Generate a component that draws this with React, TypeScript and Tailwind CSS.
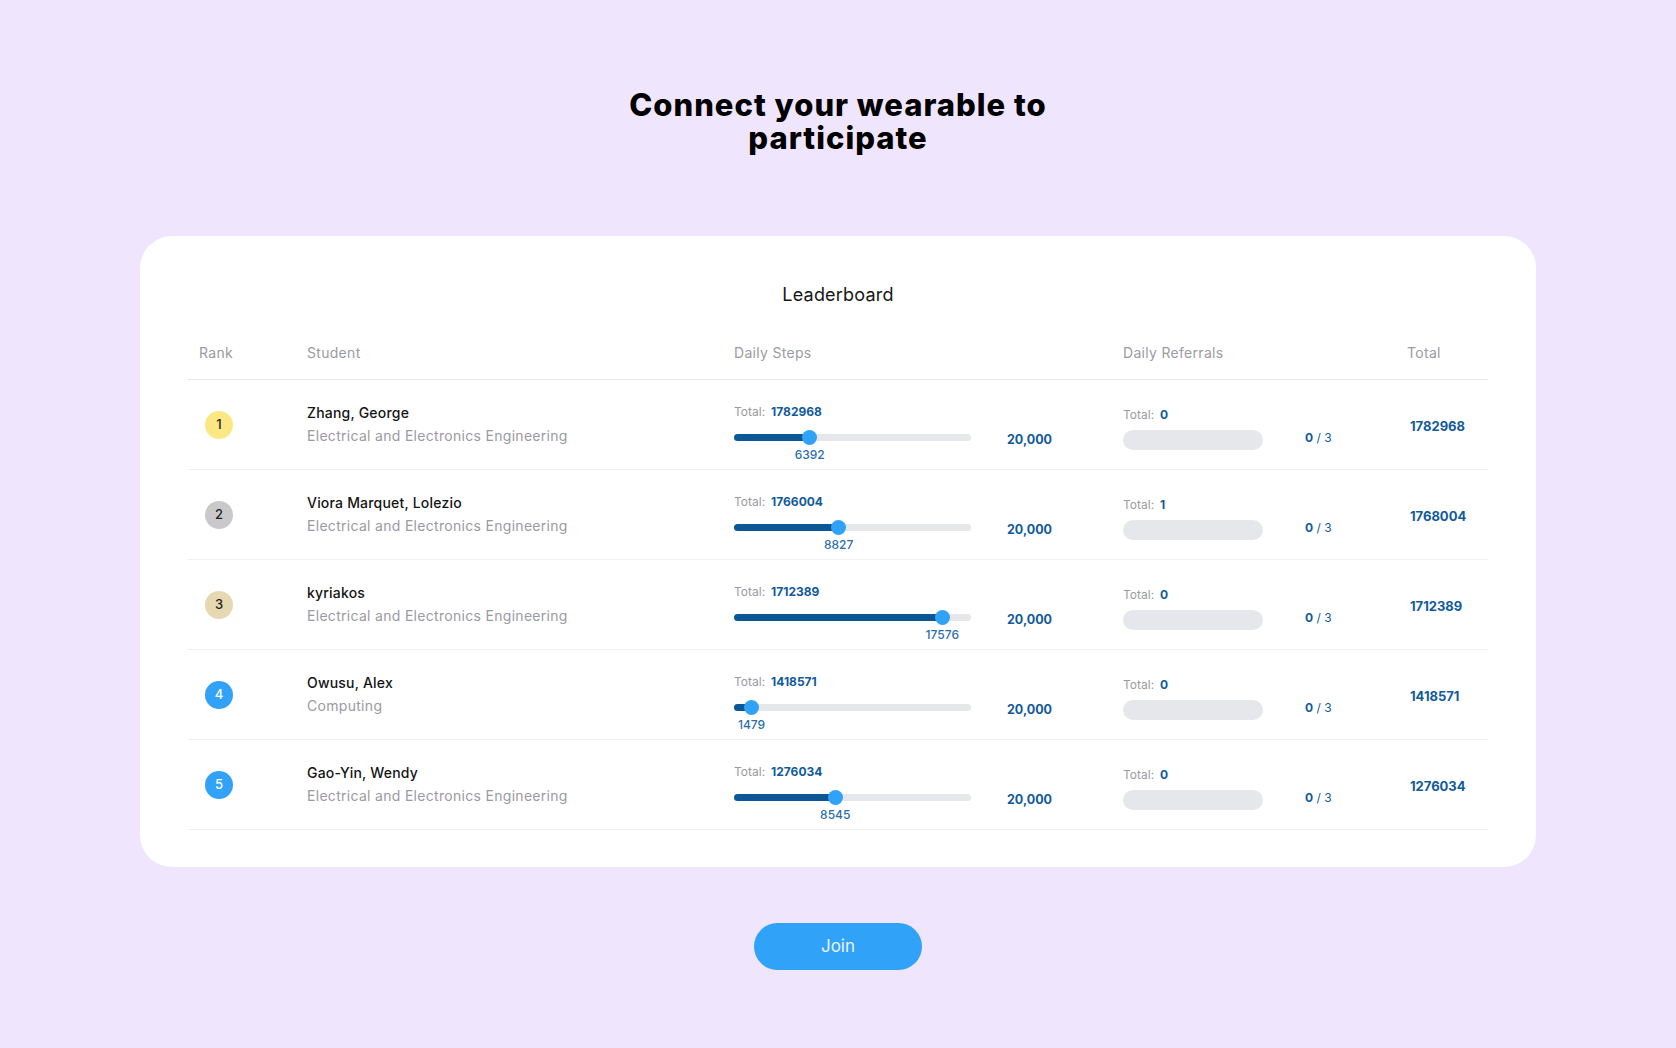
import React from "react";

type Row = {
  rank: number;
  name: string;
  dept: string;
  stepsTotal: string;
  daily: number;
  refTotal: number;
  total: string;
};

const rows: Row[] = [
  { rank: 1, name: "Zhang, George", dept: "Electrical and Electronics Engineering", stepsTotal: "1782968", daily: 6392, refTotal: 0, total: "1782968" },
  { rank: 2, name: "Viora Marquet, Lolezio", dept: "Electrical and Electronics Engineering", stepsTotal: "1766004", daily: 8827, refTotal: 1, total: "1768004" },
  { rank: 3, name: "kyriakos", dept: "Electrical and Electronics Engineering", stepsTotal: "1712389", daily: 17576, refTotal: 0, total: "1712389" },
  { rank: 4, name: "Owusu, Alex", dept: "Computing", stepsTotal: "1418571", daily: 1479, refTotal: 0, total: "1418571" },
  { rank: 5, name: "Gao-Yin, Wendy", dept: "Electrical and Electronics Engineering", stepsTotal: "1276034", daily: 8545, refTotal: 0, total: "1276034" },
];

function Badge({ rank }: { rank: number }) {
  const cls =
    rank === 1
      ? "bg-[#fbe883] text-[#1f1f1f]"
      : rank === 2
      ? "bg-[#c9c9cb] text-[#1f1f1f]"
      : rank === 3
      ? "bg-[#e6d8b0] text-[#1f1f1f]"
      : "bg-[#31a2f7] text-white";
  return (
    <div className={`w-[28px] h-[28px] rounded-full flex items-center justify-center text-[13px] font-medium ${cls}`}>
      {rank}
    </div>
  );
}

function Slider({ value }: { value: number }) {
  const pct = (value / 20000) * 100;
  return (
    <div className="w-[237px]">
      <div className="relative h-[14px] mt-[10px]">
        <div className="absolute left-0 right-0 top-[3.5px] h-[7px] rounded-full bg-[#e6e7eb]" />
        <div className="absolute left-0 top-[3.5px] h-[7px] rounded-full bg-[#0e5797]" style={{ width: `${pct}%` }} />
        <div
          className="absolute top-0 w-[15px] h-[15px] -ml-[7.5px] -mt-[0.5px] rounded-full bg-[#30a2f8]"
          style={{ left: `${pct}%` }}
        />
      </div>
      <div className="relative h-[16px] mt-[3px]">
        <span
          className="absolute top-0 -translate-x-1/2 text-[12px] leading-[16px] font-medium text-[#2c6ea8]"
          style={{ left: `${pct}%` }}
        >
          {value}
        </span>
      </div>
    </div>
  );
}

export default function App() {
  return (
    <div className="min-h-screen bg-[#efe6fd] flex flex-col items-center font-['Inter',sans-serif] pb-[78px]">
      <h1 className="pt-[88px] text-center text-[31px] leading-[33px] font-extrabold text-black tracking-[1px] w-[480px]">
        Connect your wearable to participate
      </h1>

      <div className="mt-[82px] w-[1396px] bg-white rounded-[32px] px-12 pt-[47px] pb-[37px]">
        <div className="text-center text-[18px] leading-[24px] text-[#161616] tracking-[0.2px]">Leaderboard</div>

        <div className="mt-[19px] flex items-center h-[54px] border-b border-[#e6e6e9] text-[14px] text-[#9b9ba3] tracking-[0.3px]">
          <div className="w-[119px] pl-[11px]">Rank</div>
          <div className="w-[427px]">Student</div>
          <div className="w-[389px]">Daily Steps</div>
          <div className="w-[284px]">Daily Referrals</div>
          <div className="flex-1">Total</div>
        </div>

        {rows.map((r) => (
          <div key={r.rank} className="flex h-[90px] border-b border-[#efeff1]">
            <div className="w-[119px] pl-[17px] flex items-center">
              <Badge rank={r.rank} />
            </div>
            <div className="w-[427px] flex flex-col justify-center">
              <div className="text-[14px] leading-[20px] font-medium text-[#141414] tracking-[0.2px]">{r.name}</div>
              <div className="mt-[3px] text-[14px] leading-[20px] text-[#9a9aa2] tracking-[0.3px]">{r.dept}</div>
            </div>
            <div className="w-[389px] pt-[24px] flex items-start">
              <div className="w-[237px]">
                <div className="text-[12px] leading-[16px] flex gap-[6px]">
                  <span className="text-[#9a9aa2]">Total:</span>
                  <span className="font-bold text-[#125a9b]">{r.stepsTotal}</span>
                </div>
                <Slider value={r.daily} />
              </div>
              <div className="ml-[36px] mt-[28px] text-[12.5px] leading-[16px] font-bold text-[#125a9b]">20,000</div>
            </div>
            <div className="w-[284px] pt-[27px] flex items-start">
              <div className="w-[140px]">
                <div className="text-[12px] leading-[16px] flex gap-[6px]">
                  <span className="text-[#9a9aa2]">Total:</span>
                  <span className="font-bold text-[#125a9b]">{r.refTotal}</span>
                </div>
                <div className="mt-[7px] h-[20px] rounded-full bg-[#e6e7eb]" />
              </div>
              <div className="ml-[42px] mt-[23px] text-[12px] leading-[16px] text-[#125a9b]">
                <span className="font-bold">0</span> / 3
              </div>
            </div>
            <div className="flex-1 flex items-center pl-[3px] pt-[4px]">
              <span className="text-[13px] font-bold text-[#125a9b]">{r.total}</span>
            </div>
          </div>
        ))}
      </div>

      <button className="mt-[56px] w-[168px] h-[47px] rounded-full bg-[#30a2f8] text-[#eaf3ff] text-[17px]">
        Join
      </button>
    </div>
  );
}
